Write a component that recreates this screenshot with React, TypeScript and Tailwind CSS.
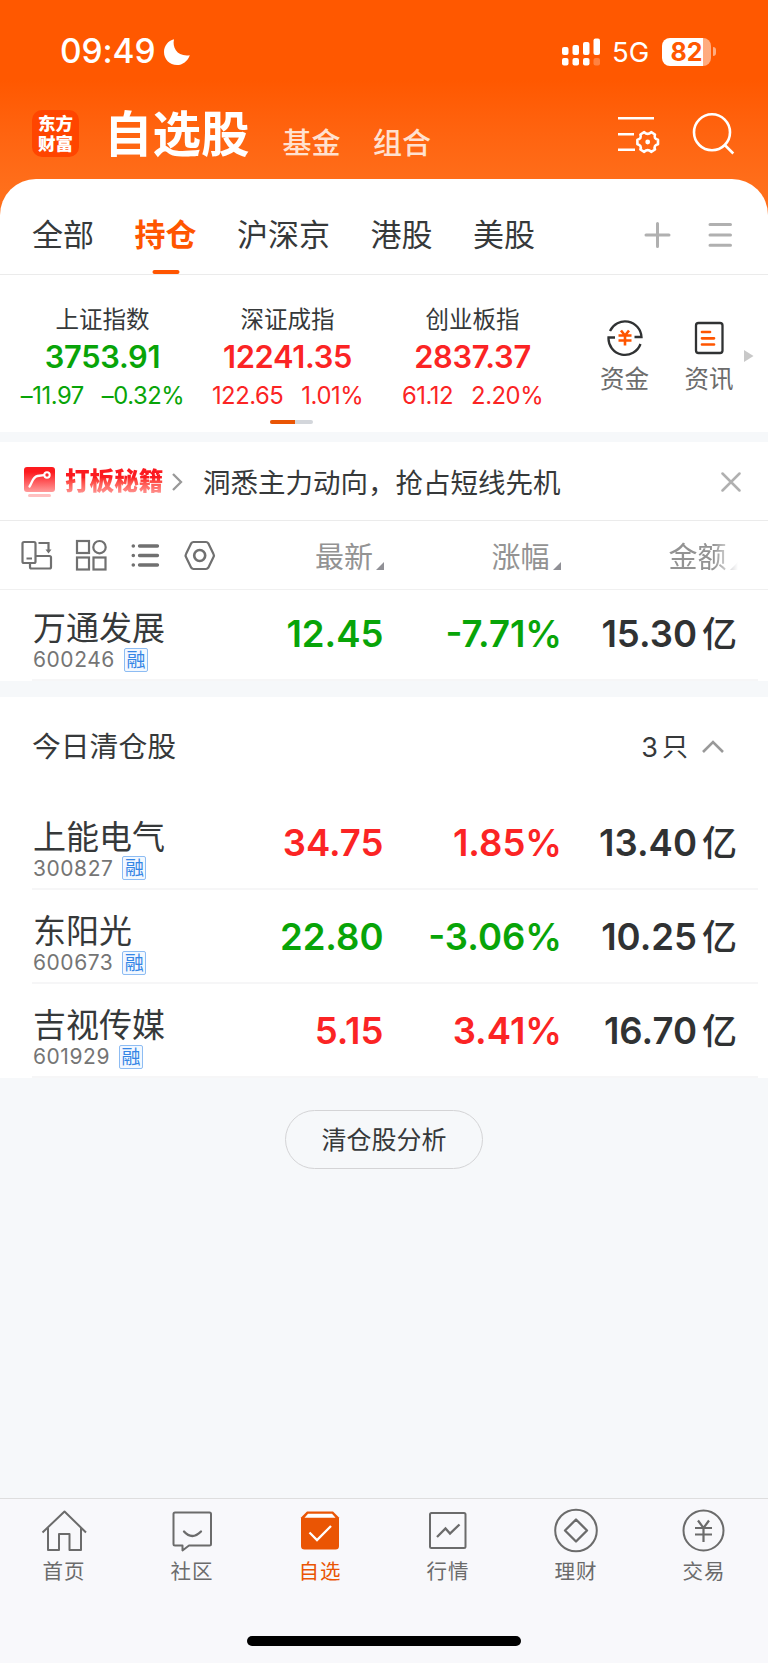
import type { ReactNode } from "react";

interface IndexQuote {
  name: string;
  value: string;
  change: string;
  percent: string;
  up: boolean;
}

interface Stock {
  name: string;
  code: string;
  price: string;
  percent: string;
  amount: string;
  up: boolean;
}

const INDICES: IndexQuote[] = [
  { name: "上证指数", value: "3753.91", change: "–11.97", percent: "–0.32%", up: false },
  { name: "深证成指", value: "12241.35", change: "122.65", percent: "1.01%", up: true },
  { name: "创业板指", value: "2837.37", change: "61.12", percent: "2.20%", up: true },
];

const HOLDINGS: Stock[] = [
  { name: "万通发展", code: "600246", price: "12.45", percent: "-7.71%", amount: "15.30", up: false },
];

const CLEARED: Stock[] = [
  { name: "上能电气", code: "300827", price: "34.75", percent: "1.85%", amount: "13.40", up: true },
  { name: "东阳光", code: "600673", price: "22.80", percent: "-3.06%", amount: "10.25", up: false },
  { name: "吉视传媒", code: "601929", price: "5.15", percent: "3.41%", amount: "16.70", up: true },
];

const MARKETS = ["全部", "持仓", "沪深京", "港股", "美股"];

function StatusBar() {
  return (
    <div className="flex h-[103px] items-center pl-[60px] pr-[52px] text-white">
      <span className="mt-px text-[33.500px] leading-none font-medium tracking-[-0.1px]">09:49</span>
      <svg className="ml-[8px]" width="28" height="28" viewBox="0 0 28 28" fill="currentColor">
        <path d="M11 1.2C9 9.8 14.5 19 26.8 17.2 24.500 23.500 19.500 27 14 27 6.500 27 1 21.300 1 14 1 7.800 5 2.700 11 1.200Z" />
      </svg>
      <svg className="ml-auto" width="39" height="28" viewBox="0 0 39 28" fill="currentColor">
        <rect x="0" y="9" width="6.500" height="8" rx="2" />
        <rect x="10.500" y="7" width="6.500" height="10" rx="2" />
        <rect x="21" y="4" width="6.500" height="13" rx="2" />
        <rect x="31.500" y="0.500" width="6.500" height="16.500" rx="2" />
        <rect x="0" y="20" width="6.500" height="7.500" rx="2" />
        <rect x="10.500" y="20" width="6.500" height="7.500" rx="2" />
        <rect x="21" y="20" width="6.500" height="7.500" rx="2" />
        <rect x="31.500" y="20" width="6.500" height="7.500" rx="2" opacity="0.25" />
      </svg>
      <span className="mt-[2px] ml-[11px] w-[38px] text-[27.500px] leading-none">5G</span>
      <div className="ml-[12px] flex h-[28px] w-[49px] items-center justify-center overflow-hidden rounded-[8px] bg-linear-to-r from-white from-83% to-white/50 to-83%">
        <span className="pt-px text-[25px] leading-none font-bold text-[#ff5800]">82</span>
      </div>
      <div className="ml-[2px] h-[9px] w-[3px] rounded-r-full bg-white/50" />
    </div>
  );
}

function TitleBar() {
  return (
    <div className="flex h-[76px] items-start pl-[32px] text-white">
      <div className="mt-[7px] flex h-[47px] w-[47px] flex-col items-center justify-center rounded-[10px] bg-[#ff4500] text-[17.500px] leading-[20px] font-black">
        <span>东方</span>
        <span>财富</span>
      </div>
      <h1 className="mt-[7px] ml-[25px] w-[147px] text-[48.500px] leading-[50px] font-bold whitespace-nowrap">自选股</h1>
      <span className="mt-[26px] ml-[31.500px] text-[29px] leading-[30px] font-medium text-[#ffe1d0]">基金</span>
      <span className="mt-[26px] ml-[32.500px] text-[29px] leading-[30px] font-medium text-[#ffe1d0]">组合</span>
      <svg className="mt-[12px] ml-auto" width="43" height="42" viewBox="0 0 43 42" fill="none" stroke="currentColor" strokeWidth="2.600">
        <path d="M1 3.300H37M1 19.300H17M1 34.800H18" />
        <path
          strokeLinejoin="round"
          d="M41 24.800V29.200Q36.400 30.300 38 34.500L34.200 36.800Q30.700 33.500 27.200 36.800L23.400 34.500Q25 30.300 20.400 29.200V24.800Q25 23.700 23.400 19.500L27.200 17.200Q30.700 20.500 34.200 17.200L38 19.500Q36.400 23.700 41 24.800Z"
        />
        <circle cx="30.700" cy="27" r="2.400" fill="currentColor" stroke="none" />
      </svg>
      <svg className="mt-[9px] mr-[33px] ml-[32px]" width="43" height="44" viewBox="0 0 43 44" fill="none" stroke="currentColor" strokeWidth="2.600">
        <circle cx="20" cy="20.300" r="18" />
        <path d="M32.800 33 41.300 41.500" />
      </svg>
    </div>
  );
}

function MarketTabs() {
  return (
    <div className="flex h-[96px] items-center rounded-t-[36px] border-b border-[#ebebeb] bg-white pl-[32px]">
      <div className="flex h-full gap-[40.500px]">
        {MARKETS.map((label) => (
          <div
            key={label}
            className={`relative flex h-full items-center pt-[16px] text-[31px] leading-none ${
              label === "持仓" ? "font-bold text-[#ff5500]" : "text-[#36393a]"
            }`}
          >
            {label}
            {label === "持仓" && (
              <span className="absolute bottom-0 left-1/2 h-[4px] w-[27px] -translate-x-1/2 rounded-full bg-[#ff5500]" />
            )}
          </div>
        ))}
      </div>
      <svg className="mt-[17px] mr-[36px] ml-auto" width="88" height="26" viewBox="0 0 88 26" stroke="#b0b0b0" strokeWidth="3" strokeLinecap="round">
        <path d="M2 13H25M13.500 1.500V24.500M66 2.500H86.500M66 13H86.500M66 23.300H86.500" />
      </svg>
    </div>
  );
}

function IndexPanel() {
  return (
    <section className="h-[157px] bg-white">
      <div className="flex h-[145px] pl-[10px]">
        {INDICES.map((item) => (
          <div
            key={item.name}
            className={`flex w-[185px] flex-col items-center pt-[32px] whitespace-nowrap ${
              item.up ? "text-[#fb2424]" : "text-[#08a408]"
            }`}
          >
            <span className="text-[23.500px] leading-[26px] text-[#36393a]">{item.name}</span>
            <span className="mt-[8px] text-[30.800px] leading-[32px] font-semibold tracking-[-0.3px]">{item.value}</span>
            <div className="mt-[10px] flex gap-[18px] text-[23.800px] leading-[26px] tracking-[-0.450px]">
              <span>{item.change}</span>
              <span>{item.percent}</span>
            </div>
          </div>
        ))}
        <div className="ml-[34.500px] flex w-[50px] flex-col items-center pt-[42px] text-[24.500px] leading-[26px] whitespace-nowrap text-[#6c6c6c]">
          <svg width="40" height="40" viewBox="0 0 40 40" fill="none" stroke="#303233" strokeWidth="2.300">
            <path d="M5 14A16.500 16.500 0 0 1 36.500 20H29.500M35.500 27A16.500 16.500 0 0 1 3.500 20.500H10" />
            <path stroke="#ff5500" strokeWidth="2.600" d="M16 13.500 20 18.500 24 13.500M13.500 18.500H26.500M13.500 23.500H26.500M20 18.500V28.500" />
          </svg>
          <span className="mt-[9px]">资金</span>
        </div>
        <div className="ml-[34.500px] flex w-[50px] flex-col items-center pt-[42px] text-[24.500px] leading-[26px] whitespace-nowrap text-[#6c6c6c]">
          <svg width="40" height="40" viewBox="0 0 40 40" fill="none" stroke="#303233" strokeWidth="2.300">
            <rect x="7" y="6" width="26.500" height="30" rx="2.500" />
            <path stroke="#ff5500" strokeWidth="2.700" strokeLinecap="round" d="M13 15H21M13 21.300H25M13 27.500H25" />
          </svg>
          <span className="mt-[9px]">资讯</span>
        </div>
        <svg className="mt-[75px] ml-[9.500px]" width="10" height="12" viewBox="0 0 10 12">
          <path fill="#c8c8c8" d="M0 0 9.500 6 0 12Z" />
        </svg>
      </div>
      <div className="ml-[270px] h-[4px] w-[43px] overflow-hidden rounded-full bg-[#d3d6db]">
        <div className="h-full w-[25px] bg-[#e95504]" />
      </div>
    </section>
  );
}

function Banner() {
  return (
    <div className="flex h-[79px] items-center border-b border-[#ebebeb] bg-white pl-[23px]">
      <svg className="mt-px" width="33" height="32" viewBox="0 0 33 32" fill="none">
        <defs>
          <linearGradient id="board" x1="0" y1="0" x2="0" y2="1">
            <stop offset="0.200" stopColor="#fd1a1e" />
            <stop offset="1" stopColor="#ff9b9b" />
          </linearGradient>
        </defs>
        <rect x="1" y="1" width="31" height="25" rx="3" fill="url(#board)" />
        <rect x="5" y="28" width="23" height="3" rx="1.500" fill="#ffc0c0" />
        <path d="M6.500 20.500C9 17 9.500 11 14.500 10L21 9.200" stroke="#fff" strokeWidth="2.300" strokeLinecap="round" />
        <circle cx="24" cy="9" r="2.700" stroke="#fff" strokeWidth="2" />
      </svg>
      <span className="ml-[9px] bg-linear-to-b from-[#fb1a20] from-35% to-[#ff9a9a] bg-clip-text text-[24.600px] leading-[27px] font-black text-transparent">
        打板秘籍
      </span>
      <svg className="mt-px ml-[8px]" width="14" height="20" viewBox="0 0 14 20" fill="none" stroke="#999" strokeWidth="2.300">
        <path d="M2 2 10 10 2 18" />
      </svg>
      <span className="mt-[6px] ml-[17.500px] text-[27.500px] leading-none text-[#36393a]">洞悉主力动向，抢占短线先机</span>
      <svg className="mt-[2px] mr-[27px] ml-auto" width="20" height="20" viewBox="0 0 20 20" stroke="#b0b0b0" strokeWidth="2.500" strokeLinecap="round">
        <path d="M1.500 1.500 18.500 18.500M18.500 1.500 1.500 18.500" />
      </svg>
    </div>
  );
}

function ColumnTitle({ children }: { children: ReactNode }) {
  return (
    <div className="flex w-[176.500px] items-center justify-end">
      <span className="mt-[4px] text-[29px] leading-none text-[#939393]">{children}</span>
      <svg className="mt-[21px] ml-[3px]" width="8" height="8" viewBox="0 0 8 8">
        <path fill="#909096" d="M8 0V8H0Z" />
      </svg>
    </div>
  );
}

function ListHeader() {
  return (
    <div className="flex h-[69px] items-center border-b border-[#f0f0f0] bg-white pl-[21px]">
      <svg className="mt-[2px]" width="196" height="34" viewBox="0 0 196 34" fill="none" stroke="#707070" strokeWidth="2.200">
        {/* 横竖屏切换 */}
        <rect x="1.500" y="3" width="13" height="21" rx="1.500" />
        <path d="M5.500 19.500H11M17.500 4H27.500V11M14.500 17H28.500Q30 17 30 18.500V28Q30 29.500 28.500 29.500H10.500Q9 29.500 9 28V24" />
        <path fill="#707070" stroke="none" d="M24.500 10.500H30.500L27.500 14.500Z" />
        {/* 宫格 */}
        <rect x="56" y="2" width="12" height="12" />
        <circle cx="78.500" cy="8.200" r="6.200" />
        <rect x="56" y="18.500" width="12" height="12" />
        <rect x="72.500" y="18.500" width="12" height="12" />
        {/* 列表 */}
        <path strokeWidth="3.300" strokeLinecap="round" d="M118.500 7H136.500M118.500 16.500H136.500M118.500 26H136.500" />
        <path strokeWidth="3.600" strokeLinecap="round" d="M112.300 7h.01M112.300 16.500h.01M112.300 26h.01" />
        {/* 设置 */}
        <path strokeLinejoin="round" d="M172.500 3H185Q186.500 3 187.300 4.300L192.500 15Q193.300 16.500 192.500 18L187.300 28.700Q186.500 30 185 30H172.500Q171 30 170.200 28.700L165 18Q164.200 16.500 165 15L170.200 4.300Q171 3 172.500 3Z" />
        <circle cx="178.700" cy="16.500" r="5.500" strokeWidth="2.600" />
      </svg>
      <div className="-ml-[9.500px] flex">
        <ColumnTitle>最新</ColumnTitle>
        <ColumnTitle>涨幅</ColumnTitle>
        <div className="ml-[0.500px] mask-r-from-86% mask-r-to-100%">
          <ColumnTitle>金额</ColumnTitle>
        </div>
      </div>
    </div>
  );
}

function StockRow({ stock }: { stock: Stock }) {
  const tone = stock.up ? "text-[#fb2424]" : "text-[#08a408]";
  return (
    <div className="mr-[10px] ml-[32px] flex h-[94.300px] items-end border-b-2 border-[#f6f6f7]">
      <div className="w-[175px] pb-[7px] pl-[1px]">
        <div className="mb-px text-[33px] leading-[36px] whitespace-nowrap text-[#36393a]">{stock.name}</div>
        <div className="flex h-[25px] items-center gap-[9px]">
          <span className="text-[21px] leading-none tracking-[0.550px] text-[#757575]">{stock.code}</span>
          <span className="flex h-[24px] w-[24px] items-center justify-center rounded-[2px] border border-[#8dbcf3] bg-[#f2f8ff] pt-px text-[19px] leading-none text-[#3585e5]">
            融
          </span>
        </div>
      </div>
      <div className={`w-[176.500px] pb-[26px] text-right text-[36.500px] leading-[38px] font-semibold ${tone}`}>{stock.price}</div>
      <div className={`w-[178.500px] pb-[26px] text-right text-[36.500px] leading-[38px] font-semibold ${tone}`}>{stock.percent}</div>
      <div className="flex w-[175px] items-center justify-end pb-[26px] text-[36.500px] leading-[38px] font-semibold text-[#303233]">
        {stock.amount}
        <span className="ml-[5px] text-[35px] font-medium">亿</span>
      </div>
    </div>
  );
}

function NavItem({ label, active, children }: { label: string; active?: boolean; children: ReactNode }) {
  return (
    <div className={`flex w-[128px] flex-col items-center pt-[9px] ${active ? "text-[#ea5504]" : "text-[#6b6b6b]"}`}>
      <svg width="46" height="46" viewBox="0 0 46 46" fill="none" stroke="currentColor" strokeWidth="2">
        {children}
      </svg>
      <span className="mt-[6px] text-[20.500px] leading-[24px] tracking-[1px]">{label}</span>
    </div>
  );
}

function BottomNav() {
  return (
    <nav className="flex h-[165px] flex-col border-t border-[#dedede] bg-[#f8f8fb]">
      <div className="flex">
        <NavItem label="首页">
          <path strokeLinejoin="round" d="M1.500 24.500 23.500 3.500 45 24.500M7 20V42H18V26H28.500V42H40V20" />
        </NavItem>
        <NavItem label="社区">
          <path strokeLinejoin="round" d="M6 4.500H40.500Q42 4.500 42 6V36Q42 37.500 40.500 37.500H20L13.500 42.500V37.500H6Q4.500 37.500 4.500 36V6Q4.500 4.500 6 4.500Z" />
          <path strokeWidth="2.300" strokeLinecap="round" d="M15 23.500Q23 32.500 32 23.500" />
        </NavItem>
        <NavItem label="自选" active>
          <path fill="currentColor" stroke="none" d="M10 3.500H36L42 9.500V38Q42 41.500 38.500 41.500H7.500Q4 41.500 4 38V9.500Z" />
          <path fill="#fff" stroke="none" d="M11 5.700H35L38.500 9.800H7.500Z" />
          <path stroke="#fff" strokeWidth="2.300" d="M12.500 24.500 20 32 34 18" />
        </NavItem>
        <NavItem label="行情">
          <rect x="5" y="5" width="35.500" height="35" rx="1.500" />
          <path strokeWidth="2.300" d="M12 29 20.500 20.500 25 25.500 34.500 16.500" />
        </NavItem>
        <NavItem label="理财">
          <circle cx="23" cy="22.500" r="20.800" />
          <path strokeWidth="2.300" strokeLinejoin="round" d="M23 11.500 34 22.500 23 33.500 12 22.500Z" />
        </NavItem>
        <NavItem label="交易">
          <circle cx="22.500" cy="22.500" r="20" />
          <path strokeWidth="2.200" d="M17 12.500 22.500 20 28 12.500M14 20H31M14 26.500H31M22.500 20V34" />
        </NavItem>
      </div>
      <div className="mt-auto mb-[17px] ml-[247px] h-[10px] w-[274px] rounded-full bg-black" />
    </nav>
  );
}

export default function App() {
  return (
    <div className="flex h-[1663px] w-[768px] flex-col overflow-hidden bg-[#f6f8fa] font-['Inter','Noto_Sans_CJK_SC',sans-serif]">
      <header className="bg-linear-to-b from-[#ff5800] from-[80px] to-[#ff6f1b] to-[190px]">
        <StatusBar />
        <TitleBar />
        <MarketTabs />
      </header>

      <IndexPanel />

      <div className="mt-[10px]">
        <Banner />
        <ListHeader />
      </div>

      <div className="flex h-[91px] flex-col justify-end bg-white">
        {HOLDINGS.map((stock) => (
          <StockRow key={stock.code} stock={stock} />
        ))}
      </div>

      {/* 今日清仓股 */}
      <section className="mt-[16px] bg-white">
        <div className="flex h-[98.500px] items-center pr-[43px] pt-[2px] pl-[32px] text-[#36393a]">
          <h2 className="text-[28.800px] leading-none">今日清仓股</h2>
          <span className="ml-auto flex items-center gap-[4px] text-[27px] leading-none">
            3<span className="text-[26px]">只</span>
          </span>
          <svg className="ml-[13px]" width="24" height="16" viewBox="0 0 24 16" fill="none" stroke="#999" strokeWidth="2.600">
            <path d="M2 13 12 3 22 13" />
          </svg>
        </div>
        {CLEARED.map((stock) => (
          <StockRow key={stock.code} stock={stock} />
        ))}
      </section>

      <button className="mx-auto mt-[32px] h-[59px] w-[198px] rounded-full border-[1.500px] border-[#d4d4d6] pt-[2px] text-[25px] leading-none text-[#36393a]">
        清仓股分析
      </button>

      <div className="mt-auto">
        <BottomNav />
      </div>
    </div>
  );
}
